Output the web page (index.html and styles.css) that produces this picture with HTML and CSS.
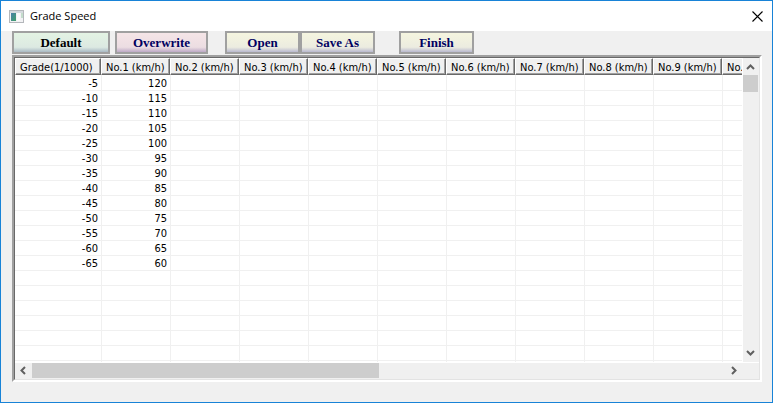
FILE: index.html
```html
<!DOCTYPE html>
<html lang="en">
<head>
    <meta charset="UTF-8">
    <meta name="viewport" content="width=device-width, initial-scale=1.0">
    <title>Grade Speed</title>
    <link rel="stylesheet" href="styles.css">
</head>
<body>
    <div class="window">
        <header class="titlebar">
            <svg class="app-icon" width="15" height="13" viewBox="0 0 15 13" aria-hidden="true">
                <defs>
                    <linearGradient id="screen" x1="0" y1="0" x2="1" y2="1">
                        <stop offset="0" stop-color="#4a7fa8"/>
                        <stop offset="1" stop-color="#3fa06a"/>
                    </linearGradient>
                </defs>
                <rect x="0.5" y="0.5" width="14" height="12" fill="#f2f2f4" stroke="#b4b7bb"/>
                <rect x="1" y="1" width="13" height="2" fill="#d5dade"/>
                <rect x="2" y="3" width="5" height="8" fill="url(#screen)"/>
                <rect x="8" y="3" width="3" height="8" fill="#fafafa"/>
                <rect x="12" y="3" width="2" height="5" fill="#c3dccb"/>
            </svg>
            <h1 class="title">Grade Speed</h1>
            <button type="button" class="close" aria-label="Close">
                <svg width="11" height="11" viewBox="0 0 11 11"><path d="M0.5 0.5L10.5 10.5M10.5 0.5L0.5 10.5" fill="none" stroke="#000" stroke-width="1.1"/></svg>
            </button>
        </header>

        <div class="toolbar">
            <button type="button" class="tool green">Default</button>
            <button type="button" class="tool pink">Overwrite</button>
            <div class="file-group">
                <button type="button" class="tool">Open</button>
                <button type="button" class="tool">Save As</button>
            </div>
            <button type="button" class="tool">Finish</button>
        </div>

        <div class="grid-frame">
            <div class="grid-inner">
                <div class="viewport">
                    <table class="grid">
                        <thead>
                            <tr id="grid-head"></tr>
                        </thead>
                        <tbody id="grid-body"></tbody>
                    </table>
                </div>
                <div class="scroll-y">
                    <svg class="arrow" width="15" height="17" viewBox="0 0 15 17"><path d="M4 11L7.5 7.5L11 11" fill="none" stroke="#606060" stroke-width="2"/></svg>
                    <div class="thumb"></div>
                    <svg class="arrow" width="15" height="17" viewBox="0 0 15 17"><path d="M4 6L7.5 9.5L11 6" fill="none" stroke="#606060" stroke-width="2"/></svg>
                </div>
                <div class="scroll-x">
                    <svg class="arrow" width="17" height="15" viewBox="0 0 17 15"><path d="M10 4L6.5 7.5L10 11" fill="none" stroke="#606060" stroke-width="2"/></svg>
                    <div class="track"><div class="thumb"></div></div>
                    <svg class="arrow" width="17" height="15" viewBox="0 0 17 15"><path d="M6 4L9.5 7.5L6 11" fill="none" stroke="#606060" stroke-width="2"/></svg>
                </div>
            </div>
        </div>
    </div>

    <script src="script.js"></script>
</body>
</html>
```
FILE: styles.css
```css
* {
    box-sizing: border-box;
}

body {
    margin: 0;
    background-color: #f0f0f0;
    color: #000;
    font-family: "DejaVu Sans Condensed", "Noto Sans", sans-serif;
    font-size: 11px;
}

button {
    margin: 0;
    padding: 0;
}

svg {
    display: block;
}

.window {
    display: flex;
    flex-direction: column;
    height: 100vh;
    border: 1px solid #1883d7;
}

.titlebar {
    display: flex;
    align-items: center;
    height: 30px;
    padding: 0 9px 0 8px;
    background-color: #fff;
}

.title {
    flex: 1;
    margin: 0 0 0 6px;
    font: 11px/16px "Open Sans", sans-serif;
}

.close {
    border: 0;
    background: none;
}

.toolbar {
    display: flex;
    height: 23px;
    padding: 0 11px;
}

.tool {
    width: 75px;
    height: 23px;
    border: 2px solid #a0a0a0;
    background: linear-gradient(#f5f5df, #ecece0 75%, #b9b9cf);
    color: #000060;
    font: bold 13px/19px "Liberation Serif", serif;
}

.green {
    width: 98px;
    margin-right: 5px;
    background: linear-gradient(#e3f3e3, #dce9e2 75%, #a9b9c4);
    color: #000;
}

.pink {
    width: 93px;
    background: linear-gradient(#f5e5e7, #ecdde2 75%, #bda9c6);
}

.file-group {
    display: flex;
    margin: 0 24px 0 17px;
}

.grid-frame {
    flex: 1;
    display: flex;
    min-height: 0;
    margin: 1px 10px 20px 11px;
    border: 2px solid #a0a0a0;
    border-right-color: #fff;
    border-bottom-color: #fff;
}

.grid-inner {
    flex: 1;
    display: grid;
    grid-template: 1fr 16px / 1fr 16px;
    gap: 1px;
    min-width: 0;
    border: 1px solid #696969;
    border-right-color: #e3e3e3;
    border-bottom-color: #e3e3e3;
    background-color: #fff;
}

.viewport {
    min-width: 0;
    min-height: 0;
    overflow: hidden;
}

.grid {
    width: 776px;
    border-spacing: 0;
    table-layout: fixed;
}

.grid th {
    width: 69px;
    height: 17px;
    padding: 2px 0 0 4px;
    border: 1px solid #fff;
    border-right: 1px solid #696969;
    border-bottom: 1px solid #696969;
    background-color: #f0f0f0;
    box-shadow: inset -1px -1px #a0a0a0;
    font-weight: normal;
    line-height: 13px;
    text-align: left;
    white-space: nowrap;
}

.grid th:first-child {
    width: 86px;
}

.grid td {
    height: 15px;
    padding: 2px 3px 0 0;
    border-left: 1px solid #f0f0f0;
    border-bottom: 1px solid #f0f0f0;
    line-height: 12px;
    text-align: right;
}

.grid td:first-child {
    border-left: 0;
}

.grid tbody tr:first-child td {
    height: 16px;
}

.scroll-y,
.scroll-x {
    display: flex;
    background-color: #f0f0f0;
}

.scroll-y {
    flex-direction: column;
    justify-content: space-between;
    padding-right: 1px;
}

.scroll-y .thumb {
    height: 17px;
    margin-bottom: auto;
}

.scroll-x {
    grid-column: 1 / 3;
    padding: 0 16px 1px 0;
}

.track {
    flex: 1;
}

.thumb {
    background-color: #cdcdcd;
}

.scroll-x .thumb {
    width: 50%;
    height: 15px;
}
```
FILE: script.js
```js
const rows = [
    [-5, 120], [-10, 115], [-15, 110], [-20, 105], [-25, 100],
    [-30, 95], [-35, 90], [-40, 85], [-45, 80], [-50, 75],
    [-55, 70], [-60, 65], [-65, 60]
];
const speedColumns = 10;
const rowCount = 20;

let head = '<th>Grade(1/1000)</th>';
for (let i = 1; i <= speedColumns; i++) {
    head += `<th>No.${i} (km/h)</th>`;
}
document.getElementById('grid-head').innerHTML = head;

let body = '';
for (let r = 0; r < rowCount; r++) {
    const values = rows[r] || [];
    body += '<tr>';
    for (let c = 0; c <= speedColumns; c++) {
        body += `<td>${values[c] ?? ''}</td>`;
    }
    body += '</tr>';
}
document.getElementById('grid-body').innerHTML = body;
```
